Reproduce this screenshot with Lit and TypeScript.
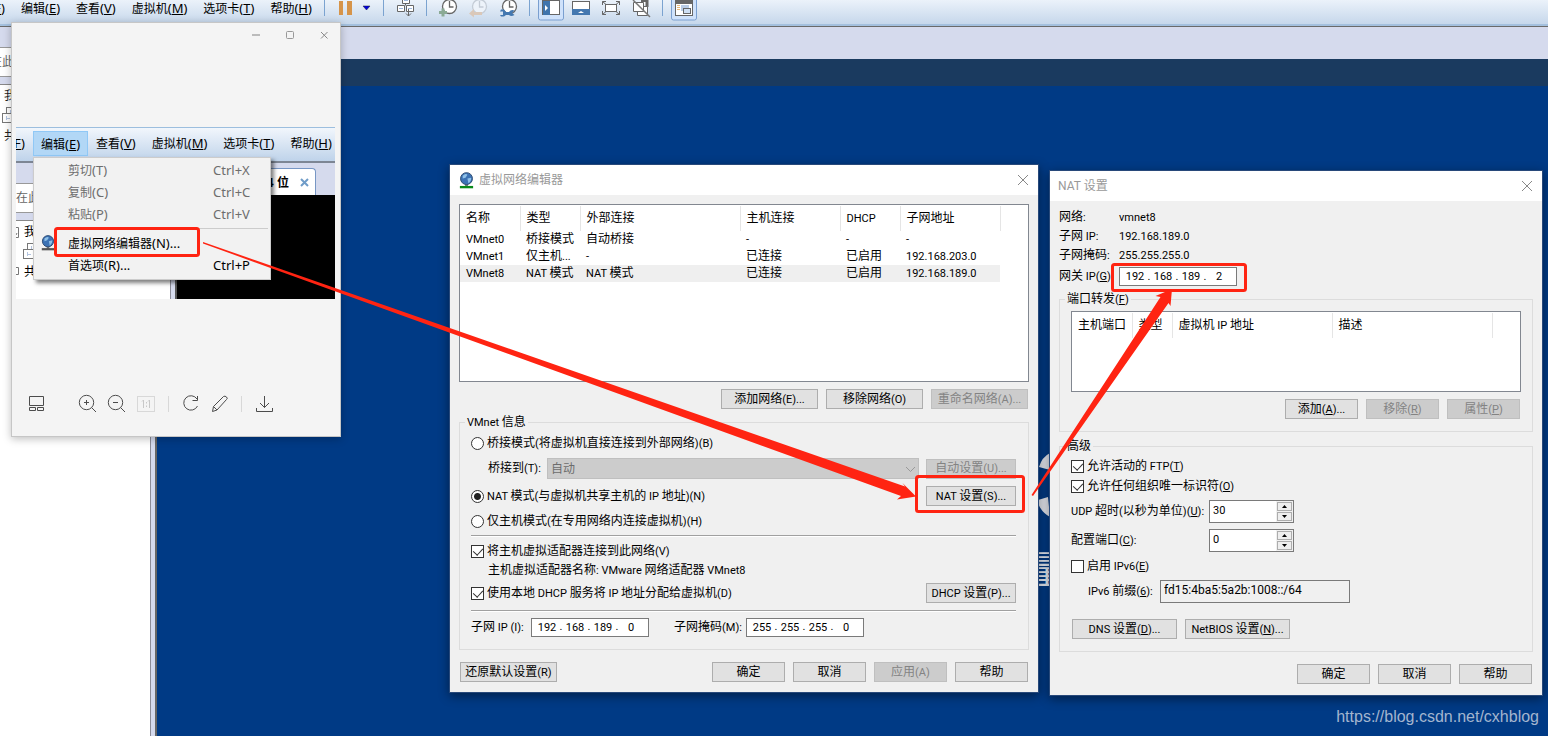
import { LitElement, html, css, svg } from "lit";
import { customElement } from "lit/decorators.js";

/* Sets Latin runs in their own size next to the Chinese glyphs; "&X" underlines the access key X. */
const tx = (text: string) =>
  text.split(/([\u2e80-\u9fff]+)/).filter(Boolean).map((run) => {
    if (/[\u2e80-\u9fff]/.test(run)) return run;
    const i = run.indexOf("&");
    if (i < 0) return html`<span class="latin">${run}</span>`;
    return html`<span class="latin">${run.slice(0, i)}<u>${run[i + 1]}</u>${run.slice(i + 2)}</span>`;
  });

const shared = css`
  * { box-sizing: border-box; }
  :host { font: 12px/16px "Roboto", "Noto Sans CJK SC", sans-serif; color: #000; }
  button, input, select { font: inherit; color: inherit; margin: 0; border-radius: 0; }
  svg { display: block; }
  .latin { font-size: 11px; white-space: pre; }
  .menu-font { font-family: "Noto Sans", "Noto Sans CJK SC", sans-serif; }
  .menu-font .latin { font-size: 13px; }
  u { text-underline-offset: 1px; }
`;

const dialogStyles = css`
  :host { display: block; background: #f0f0f0; border: 1px solid #28497a; box-shadow: 0 3px 10px rgba(0, 0, 0, 0.45); }
  .title { display: flex; align-items: center; height: 30px; padding: 0 9px 0 8px; background: #fff; color: #999; }
  .title h2 { flex: 1; margin: 0; font: inherit; }
  .title .latin { font-size: 12px; }
  .close { width: 12px; height: 12px; padding: 0; border: 0; background: none; }
  .btn { height: 20px; min-width: 73px; padding: 0 2px; border: 1px solid #adadad; background: #e1e1e1; line-height: 16px; white-space: nowrap; }
  .btn:disabled { background: #ccc; border-color: #bfbfbf; color: #838383; }
  .btn.w90 { width: 90px; }
  .btn.w97 { width: 97px; }
  .btn.w105 { width: 105px; }
  .buttons { display: flex; justify-content: flex-end; gap: 8px; padding-right: 1px; }
  .buttons .left { margin-right: auto; margin-left: 1px; }
  fieldset { display: flex; flex-direction: column; margin: 5px 0 0; padding: 0 12px 12px 11px; border: 1px solid #dcdcdc; min-width: 0; }
  legend { margin-left: -6px; padding: 0 2px; }
  .list { background: #fff; border: 1px solid #828790; }
  table { border-collapse: collapse; table-layout: fixed; }
  th, td { padding: 0 0 0 6px; font-weight: normal; text-align: left; white-space: nowrap; overflow: hidden; line-height: 17px; height: 17px; }
  th { height: 25px; border-right: 1px solid #e5e5e5; }
  .row { display: flex; align-items: center; min-height: 20px; white-space: nowrap; }
  .row.between { justify-content: space-between; }
  .check { display: flex; align-items: center; gap: 3px; }
  .check input { appearance: none; position: relative; width: 13px; height: 13px; border: 1px solid #333; background: #fff; flex: none; }
  .check input[type="radio"] { border-radius: 50%; }
  .check input[type="radio"]:checked { background: radial-gradient(circle, #222 3px, #fff 4px); }
  .check input[type="checkbox"]:checked::before { content: ""; position: absolute; left: 3px; top: 0; width: 5px; height: 8px; border: solid #333; border-width: 0 1px 1px 0; transform: rotate(42deg); }
  .ip { display: flex; align-items: center; width: 118px; height: 19px; padding-left: 3px; border: 1px solid #7a7a7a; background: #fff; font-size: 11px; }
  .ip input { width: 24px; height: 17px; padding: 0; border: 0; background: none; text-align: center; outline: 0; }
  .ip span { width: 4px; text-align: center; }
  .m4 { margin-top: 4px; }
  .m5 { margin-top: 5px; }
  .m6 { margin-top: 6px; }
  .m7 { margin-top: 7px; }
`;

const closeIcon = svg`<svg width="12" height="12" viewBox="0 0 12 12"><path d="M1 1L11 11M11 1L1 11" stroke="#888" fill="none"/></svg>`;

const ipField = (id: string, name: string, parts: string[]) => html`<div class="ip">
  ${parts.map((p, i) => html`${i ? html`<span>.</span>` : ""}<input id=${i ? `${id}-${i + 1}` : id} .value=${p} aria-label=${`${name} ${i + 1}`}>`)}
</div>`;

const globe = (size: number, base: string) => svg`<svg width=${size} height=${size} viewBox="0 0 16 18">
  <path d="M8 13V16" stroke="#777" stroke-width="3"/>
  <path d="M1 16H15" stroke=${base} stroke-width="2.5"/>
  <circle cx="8" cy="7" r="6.3" fill="#3c72b4" stroke="#27466f"/>
  <path d="M4 4Q7 1 9 3L7 6 4 7ZM9 7L13 6Q13 10 10 12Z" fill="#8fc1e8"/>
</svg>`;

const machines = svg`<svg class="machines" width="14" height="18" viewBox="2 0 14 18" fill="#fff" stroke="#777">
  <rect x="6.500" y=".5" width="10" height="9"/><rect x="2.500" y="6.500" width="10" height="9"/><path d="M6.500 9V13M6.500 11.500H10M10.500 3V6" stroke="#b4c4e0"/>
</svg>`;

@customElement("network-editor")
class NetworkEditor extends LitElement {
  static styles = [shared, dialogStyles, css`
    .title h2 { padding-left: 4px; }
    .body { padding: 9px 9px 10px; }
    .list { height: 178px; padding-top: 1px; }
    .list table { width: 540px; }
    .list tr.selected td { background: #efefef; }
    .indent { padding-left: 17px; }
    .to-label { width: 59px; }
    .row select { flex: 1; appearance: none; height: 21px; padding: 0 3px; border: 1px solid #bfbfbf; background: #ccc; color: #6d6d6d; opacity: 1; }
    .select { display: grid; flex: 1; margin-right: 7px; align-items: center; }
    .select select, .select svg { grid-area: 1 / 1; }
    .select svg { justify-self: end; margin-right: 3px; }
    hr { width: 100%; height: 2px; margin: 4px 0 0; border: 0; border-top: 1px solid #a0a0a0; border-bottom: 1px solid #fff; }
    .line { height: 18px; min-height: 18px; }
    .subnet { width: 60px; }
    .mask { width: 72px; margin-left: 25px; }
    .first { margin-top: 2px; }
    .last { margin-top: 12px; }
  `];

  private rows = [
    ["VMnet0", "桥接模式", "自动桥接", "-", "-", "-"],
    ["VMnet1", "仅主机...", "-", "已连接", "已启用", "192.168.203.0"],
    ["VMnet8", "NAT 模式", "NAT 模式", "已连接", "已启用", "192.168.189.0"],
  ];

  render() {
    return html`
      <div class="title">${globe(17, "#0a8a1a")}<h2>虚拟网络编辑器</h2><button class="close" aria-label="关闭">${closeIcon}</button></div>
      <div class="body">
        <div class="list">
          <table>
            <colgroup>${[60, 60, 160, 100, 60, 100].map((w) => html`<col style="width:${w}px">`)}</colgroup>
            <thead><tr>${["名称", "类型", "外部连接", "主机连接", "DHCP", "子网地址"].map((h) => html`<th>${tx(h)}</th>`)}</tr></thead>
            <tbody>${this.rows.map((r, i) => html`<tr class=${i === 2 ? "selected" : ""}>${r.map((c) => html`<td>${tx(c)}</td>`)}</tr>`)}</tbody>
          </table>
        </div>
        <div class="buttons m7">
          <button class="btn w97">${tx("添加网络(E)...")}</button>
          <button class="btn w97">${tx("移除网络(O)")}</button>
          <button class="btn w97" disabled>${tx("重命名网络(A)...")}</button>
        </div>
        <fieldset>
          <legend>${tx("VMnet 信息")}</legend>
          <div class="row first"><label class="check"><input type="radio" name="mode"><span>${tx("桥接模式(将虚拟机直接连接到外部网络)(B)")}</span></label></div>
          <div class="row indent m5">
            <label class="to-label" for="bridge">${tx("桥接到(T):")}</label>
            <div class="select"><select id="bridge" disabled><option>自动</option></select>
              <svg width="11" height="8" viewBox="0 0 11 8"><path d="M1 2L5.500 6.500 10 2" fill="none" stroke="#999"/></svg></div>
            <button class="btn w90" disabled>${tx("自动设置(U)...")}</button>
          </div>
          <div class="row between m7">
            <label class="check"><input type="radio" name="mode" checked><span>${tx("NAT 模式(与虚拟机共享主机的 IP 地址)(N)")}</span></label>
            <button class="btn w90">${tx("NAT 设置(S)...")}</button>
          </div>
          <div class="row m5"><label class="check"><input type="radio" name="mode"><span>${tx("仅主机模式(在专用网络内连接虚拟机)(H)")}</span></label></div>
          <hr>
          <div class="row m4"><label class="check"><input type="checkbox" checked><span>${tx("将主机虚拟适配器连接到此网络(V)")}</span></label></div>
          <div class="row line indent"><span>${tx("主机虚拟适配器名称: VMware 网络适配器 VMnet8")}</span></div>
          <div class="row between m4">
            <label class="check"><input type="checkbox" checked><span>${tx("使用本地 DHCP 服务将 IP 地址分配给虚拟机(D)")}</span></label>
            <button class="btn w90">${tx("DHCP 设置(P)...")}</button>
          </div>
          <hr class="m7">
          <div class="row m5">
            <label class="subnet" for="subnet">${tx("子网 IP (I):")}</label>${ipField("subnet", "子网 IP", ["192", "168", "189", "0"])}
            <label class="mask" for="mask">${tx("子网掩码(M):")}</label>${ipField("mask", "子网掩码", ["255", "255", "255", "0"])}
          </div>
        </fieldset>
        <div class="buttons last">
          <button class="btn w97 left">${tx("还原默认设置(R)")}</button>
          <button class="btn">确定</button>
          <button class="btn">取消</button>
          <button class="btn" disabled>${tx("应用(A)")}</button>
          <button class="btn">帮助</button>
        </div>
      </div>`;
  }
}

@customElement("nat-settings")
class NatSettings extends LitElement {
  static styles = [shared, dialogStyles, css`
    .body { padding: 7px 9px 11px; }
    dl { display: grid; grid-template-columns: 60px 1fr; margin: 0; line-height: 19px; }
    dd { margin: 0; }
    .gateway { display: grid; grid-template-columns: 60px 1fr; align-items: center; margin-top: 2px; }
    fieldset { padding-right: 11px; }
    .list { height: 81px; margin-top: 3px; padding-top: 1px; }
    .list table { width: 420px; }
    .advanced { margin-top: 6px; padding-top: 2px; }
    .field { height: 23px; }
    .field > label { width: 138px; }
    .spin { display: flex; width: 85px; height: 23px; border: 1px solid #7a7a7a; background: #fff; }
    .spin input { width: 66px; height: 18px; padding: 0 3px; border: 0; background: none; font-size: 11px; outline: 0; }
    .arrows { display: flex; flex-direction: column; gap: 1px; width: 17px; padding: 1px; background: #f0f0f0; }
    .arrows button { display: grid; place-items: center; flex: 1; padding: 0; border: 1px solid #adadad; background: #eee; }
    .prefix { padding-left: 17px; }
    .field.prefix > label { width: 72px; }
    .prefix input { width: 190px; height: 23px; padding: 0 3px 3px; border: 1px solid #7a7a7a; background: #f0f0f0; font-size: 12px; }
    .more { display: flex; gap: 8px; margin-top: 16px; padding-left: 1px; }
    .last { margin-top: 12px; }
  `];

  private spin(id: string, label: string, value: string, gap: string) {
    return html`<div class="row field ${gap}">
      <label for=${id}>${tx(label)}</label>
      <div class="spin"><input id=${id} .value=${value}>
        <div class="arrows">
          <button aria-label="增加"><svg width="5" height="3" viewBox="0 0 5 3"><path d="M0 3L2.500 0 5 3Z"/></svg></button>
          <button aria-label="减少"><svg width="5" height="3" viewBox="0 0 5 3"><path d="M0 0L2.500 3 5 0Z"/></svg></button>
        </div></div>
    </div>`;
  }

  render() {
    return html`
      <div class="title"><h2>${tx("NAT 设置")}</h2><button class="close" aria-label="关闭">${closeIcon}</button></div>
      <div class="body">
        <dl>
          <dt>${tx("网络:")}</dt><dd>${tx("vmnet8")}</dd>
          <dt>${tx("子网 IP:")}</dt><dd>${tx("192.168.189.0")}</dd>
          <dt>${tx("子网掩码:")}</dt><dd>${tx("255.255.255.0")}</dd>
        </dl>
        <div class="gateway"><label for="gateway">${tx("网关 IP(&G)")}</label>${ipField("gateway", "网关 IP", ["192", "168", "189", "2"])}</div>
        <fieldset>
          <legend>${tx("端口转发(&F)")}</legend>
          <div class="list">
            <table>
              <colgroup>${[60, 40, 160, 160].map((w) => html`<col style="width:${w}px">`)}</colgroup>
              <thead><tr>${["主机端口", "类型", "虚拟机 IP 地址", "描述"].map((h) => html`<th>${tx(h)}</th>`)}</tr></thead>
            </table>
          </div>
          <div class="buttons m7">
            <button class="btn">${tx("添加(&A)...")}</button>
            <button class="btn" disabled>${tx("移除(&R)")}</button>
            <button class="btn" disabled>${tx("属性(&P)")}</button>
          </div>
        </fieldset>
        <fieldset class="advanced">
          <legend>高级</legend>
          <div class="row"><label class="check"><input type="checkbox" checked><span>${tx("允许活动的 FTP(&T)")}</span></label></div>
          <div class="row"><label class="check"><input type="checkbox" checked><span>${tx("允许任何组织唯一标识符(&O)")}</span></label></div>
          ${this.spin("udp", "UDP 超时(以秒为单位)(&U):", "30", "m4")}
          ${this.spin("port", "配置端口(&C):", "0", "m6")}
          <div class="row m4"><label class="check"><input type="checkbox"><span>${tx("启用 IPv6(&E)")}</span></label></div>
          <div class="row field prefix m4"><label for="prefix">${tx("IPv6 前缀(&6):")}</label><input id="prefix" readonly .value=${"fd15:4ba5:5a2b:1008::/64"}></div>
          <div class="more">
            <button class="btn w105">${tx("DNS 设置(&D)...")}</button>
            <button class="btn w105">${tx("NetBIOS 设置(&N)...")}</button>
          </div>
        </fieldset>
        <div class="buttons last"><button class="btn">确定</button><button class="btn">取消</button><button class="btn">帮助</button></div>
      </div>`;
  }
}

const menuItems = ["编辑(&E)", "查看(&V)", "虚拟机(&M)", "选项卡(&T)", "帮助(&H)"];

@customElement("image-viewer")
class ImageViewer extends LitElement {
  static styles = [shared, css`
    :host { display: block; background: #f4f4f4; border: 1px solid #c6c6c6; box-shadow: 0 2px 8px rgba(0, 0, 0, 0.25); }
    .controls { display: flex; justify-content: flex-end; gap: 22px; height: 104px; padding: 6px 10px 0 0; }
    .controls button { width: 12px; height: 12px; padding: 0; border: 0; background: none; }
    .picture { position: relative; height: 172px; margin: 0 5px 0 4px; overflow: hidden; border-top: 1px solid #9cbede; display: flex; flex-direction: column; }
    .bar { display: flex; align-items: center; flex: none; height: 35px; padding-bottom: 2px; border-bottom: 2px solid #7d8694; background: linear-gradient(#f1f6fc, #bfd3ea); }
    .bar span.item { flex: none; height: 25px; padding: 4px 8px; white-space: nowrap; }
    .bar span.cut { display: flex; justify-content: flex-end; width: 17px; overflow: hidden; }
    .bar span.open { padding: 4px 7px; border: 1px solid #90c8f6; background: #b2d7f6; }
    .panes { display: flex; flex: 1; background: #d5daed; }
    .side { width: 155px; padding-top: 20px; border-right: 1px solid #8c8c98; }
    .search { height: 30px; padding: 6px 0; border: solid #999; border-width: 1px 0; background: #fff; color: #666; }
    .tree { height: 90px; margin-top: 7px; border-top: 1px solid #888; background: #fff; padding-top: 3px; display: grid; align-content: start; grid-template-columns: 8px 1fr; gap: 3px 0; }
    .tree svg { align-self: center; }
    .tree .machines { grid-column: 2; margin-left: -1px; }
    .guest { flex: 1; margin-left: 4px; border-left: 2px solid #555; display: flex; flex-direction: column; padding-top: 5px; }
    .tab { display: flex; align-items: center; justify-content: flex-end; gap: 11px; width: 139px; height: 27px; padding-right: 6px; border: solid #7796c4; border-width: 1px 1px 0 0; border-radius: 0 4px 0 0; background: #fff; font-weight: bold; }
    .screen { flex: 1; background: #000; }
    .menu { position: absolute; left: 17px; top: 29px; width: 238px; padding: 1px 2px 3px; background: #f2f2f2; border: 1px solid #ccc; box-shadow: 3px 3px 4px rgba(0, 0, 0, 0.5); }
    .menu div { display: grid; grid-template-columns: 32px 1fr 55px; align-items: center; height: 22px; white-space: nowrap; }
    .menu .off { color: #6d6d6d; }
    .menu svg { margin-left: 4px; }
    .menu hr { margin: 3px 0 3px 30px; border: 0; border-top: 1px solid #ccc; }
    .tools { display: flex; align-items: flex-start; height: 137px; padding: 74px 0 0 17px; }
    .tools svg { flex: none; }
  `];

  render() {
    return html`
      <div class="controls">
        <button aria-label="最小化"><svg width="12" height="12"><path d="M2 6H10" stroke="#bbb" stroke-width="2"/></svg></button>
        <button aria-label="最大化"><svg width="12" height="12"><rect x="2.500" y="2.500" width="7" height="7" rx="1" fill="none" stroke="#999"/></svg></button>
        <button aria-label="关闭"><svg width="12" height="12"><path d="M3 3L9.500 9.500M9.500 3L3 9.500" stroke="#888"/></svg></button>
      </div>
      <div class="picture menu-font">
        <div class="bar"><span class="item cut">${tx("(&F)")}</span>${menuItems.map((m, i) => html`<span class="item ${i ? "" : "open"}">${tx(m)}</span>`)}</div>
        <div class="panes">
          <div class="side"><div class="search">在此</div><div class="tree">
            <svg width="3" height="11"><path d="M0 .5H2.500V10.500H0M0 8L1 6" stroke="#777" fill="none"/></svg><span>我</span>
            ${machines}
            <svg width="3" height="11"><path d="M0 .5H2.500V7.500H0" stroke="#777" fill="none"/></svg><span>共</span>
          </div></div>
          <div class="guest"><div class="tab"><span>${tx("64 ")}位</span><svg width="9" height="9"><path d="M1 1L8 8M8 1L1 8" stroke="#6f9cc8" stroke-width="2"/></svg></div><div class="screen"></div></div>
        </div>
        <div class="menu">
          <div class="off"><i></i><span>${tx("剪切(T)")}</span>${tx("Ctrl+X")}</div>
          <div class="off"><i></i><span>${tx("复制(C)")}</span>${tx("Ctrl+C")}</div>
          <div class="off"><i></i><span>${tx("粘贴(P)")}</span>${tx("Ctrl+V")}</div>
          <hr>
          <div>${globe(16, "#555")}<span>${tx("虚拟网络编辑器(N)...")}</span></div>
          <div><i></i><span>${tx("首选项(R)...")}</span>${tx("Ctrl+P")}</div>
        </div>
      </div>
      <div class="tools">
        <svg width="250" height="60" viewBox="29 373 250 60" fill="none" stroke="#4c4c4c">
          <path d="M29.500 396.500H43.500V405.500H29.500ZM29.500 407.500H35.500V410.500H29.500ZM37.500 407.500H43.500V410.500H37.500Z"/>
          <circle cx="86.500" cy="402.500" r="7.200"/><path d="M91.700 407.700L96 412M84 402.500H89M86.500 400V405"/>
          <circle cx="115.500" cy="402.500" r="7.200"/><path d="M120.700 407.700L125 412M113 402.500H118"/>
          <g stroke="#d8d8d8"><rect x="137.500" y="396.500" width="17" height="15"/><path stroke="#c8c8c8" d="M142 401.500L143.500 400V408M148 401.500L149.500 400V408M146.500 402V403.500M146.500 405.500V407"/><path d="M168.500 396V412M241.500 396V412"/></g>
          <path d="M197 399A7.200 7.200 0 1 0 197.500 406M197.500 396V400.500H192.500"/>
          <path d="M212.500 411.500L213.500 406.500 223.500 396.500Q225 395.500 226.500 397T226.500 399.500L217 410ZM213.500 406.500L217 410"/>
          <path d="M264.500 396V407.500M260 403L264.500 407.500 269 403M256.500 408V411.500H272.500V408"/>
        </svg>
      </div>`;
  }
}

@customElement("app-root")
class AppRoot extends LitElement {
  static styles = [shared, css`
    :host { display: flex; flex-direction: column; position: relative; height: 100vh; overflow: hidden; background: #003a85; }
    header { display: flex; flex: none; height: 27px; border-bottom: 1px solid #6a6a6a; box-shadow: inset 0 -2px #a4c0de; background: linear-gradient(#ebf2fa, #c3d5ea); }
    nav { display: flex; width: 320px; }
    nav a { flex: none; padding: 0 8px; color: inherit; text-decoration: none; white-space: nowrap; }
    nav a.cut { display: flex; justify-content: flex-end; width: 13px; padding-left: 0; overflow: hidden; }
    .work { display: flex; flex: 1; min-height: 0; }
    aside { display: flex; flex-direction: column; width: 151px; padding-top: 20px; background: #d5daed; border-right: 1px solid #8c8c98; color: #222; }
    .search { height: 30px; padding: 6px 0; border: solid #999; border-width: 1px 0; background: #fff; color: #666; text-indent: -10px; overflow: hidden; }
    .tree { display: grid; align-content: start; gap: 3px; flex: 1; margin-top: 7px; padding: 3px 0 0 4px; border-top: 1px solid #888; background: #fff; }
    .tree .machines { margin-left: -2px; }
    .split { width: 6px; background: #d5daed; border-right: 2px solid #666; }
    .stage { flex: 1; display: flex; flex-direction: column; }
    .tabs { height: 32px; background: #d5daed; }
    .band { height: 27px; background: #1a3a5f; }
    .wallpaper { position: absolute; left: 1020px; top: 440px; color: #e8ecf4; }
    .wallpaper span { position: absolute; left: 8px; top: 108px; font-size: 38px; line-height: 44px; }
    image-viewer { position: absolute; left: 11px; top: 22px; width: 330px; }
    network-editor { position: absolute; left: 449px; top: 164px; width: 590px; }
    nat-settings { position: absolute; left: 1049px; top: 170px; width: 494px; }
    .marks { position: absolute; left: 0; top: 0; pointer-events: none; }
    .credit { position: absolute; right: 9px; bottom: 8px; font: 16px/22px "Liberation Sans", sans-serif; color: #a3b5cf; }
  `];

  render() {
    return html`
      <header class="menu-font">
        <nav><a class="cut" href="#file">${tx("(&F)")}</a>${menuItems.map((m) => html`<a href="#menu">${tx(m)}</a>`)}</nav>
        <svg width="380" height="22" viewBox="320 0 380 22" fill="none" stroke="#666">
          <path stroke="#7ba3d0" d="M324.500 0V16M383.500 0V16M426.500 0V16M529.500 0V16M662.500 0V16"/>
          <path fill="#d6944a" stroke="none" d="M339 1H343V15H339ZM347 1H352V15H347Z"/>
          <path fill="#0000e0" stroke="#223" stroke-width=".5" d="M363 6H370L366.500 10Z"/>
          <g fill="#fff"><path d="M402.500 -2V3.500H409.500V-2M397.500 5.500H404.500V11.500H397.500ZM406.500 5.500H413.500V11.500H406.500ZM405.500 3.500V5.500"/><path d="M408.500 9V16M406 13.500L408.500 16 411 13.500" fill="none"/></g>
          <path stroke="#9db7dc" d="M399 8.500H403M408 8.500H412M404 .5H408"/>
          <g stroke-width="1.300"><circle cx="449.500" cy="6.500" r="7" fill="#fff"/><path d="M449.500 1V7H453.500"/><path stroke="#8baa95" stroke-width="3" d="M439 12.500H447M443 8.500V16.500"/></g>
          <g stroke="#c4ccd6" stroke-width="1.300"><circle cx="479.500" cy="6.500" r="7" fill="#edf3fa"/><path d="M479.500 1V7H483.500"/><path stroke="none" fill="#dac8b9" d="M469 13.500L474 9V12H482V15H474V17.500Z"/></g>
          <g stroke-width="1.300"><circle cx="509.500" cy="6.500" r="7" fill="#fff"/><path d="M509.500 1V7H513.500"/><path stroke="none" fill="#4478b0" d="M501 9.500H504L506 12H509Q511 9 514.500 10.500L512 13 514.500 15Q511 17 509 15H506L504 16.500H501L500 15H503V11.500H500Z"/></g>
          <rect x="538.500" y="-3" width="25" height="23" rx="2" fill="#cfe2fb" stroke="#7a9fd0"/>
          <rect x="542.500" y=".5" width="17" height="14" fill="#fff"/><path fill="#3f74ad" stroke="none" d="M543 1H550V15H543Z"/><path fill="#fff" stroke="none" d="M545 5L548 8 545 11Z"/>
          <rect x="572.500" y="1.500" width="17" height="13" fill="#fff"/><path fill="#4478b0" stroke="none" d="M572 9H590V15H572Z"/><path fill="#fff" stroke="none" d="M578 13L581 11 584 13Z"/>
          <rect x="605.500" y="4.500" width="11" height="7" fill="#fff"/><path d="M602.500 5V1.500H606M616 1.500H619.500V5M619.500 11V14.500H616M606 14.500H602.500V11M602.500 1.500L606 4.500M619.500 1.500L616 4.500M619.500 14.500L616 11.500M602.500 14.500L606 11.500"/>
          <g fill="#fff"><path stroke-width="3" d="M641 .5H647V7"/><path d="M637.500 6.500H647.500V15.500H637.500Z"/><path d="M633.500 2.500H643.500V11.500H633.500Z"/><path stroke="#777" stroke-width="1.500" d="M633 0L650 17"/></g>
          <rect x="671.500" y="-3" width="25" height="23" rx="2" fill="#cfe2fb" stroke="#7a9fd0"/>
          <rect x="675.500" y=".5" width="17" height="15" fill="#fff"/><path fill="#666" stroke="none" d="M675 0H693V4H675Z"/><path fill="#b9cce5" stroke="none" d="M681 5H689V11H681Z"/><rect x="683.500" y="8.500" width="7" height="5" fill="#cfe0f4"/><path stroke="#e8b878" d="M677 5.500H680M677 7.500H680M677 9.500H680"/>
        </svg>
      </header>
      <div class="work">
        <aside><div class="search">在此</div><div class="tree"><span>我</span>${machines}<span>共</span></div></aside>
        <div class="split"></div>
        <div class="stage"><div class="tabs"></div><div class="band"></div></div>
      </div>
      <div class="wallpaper">
        <svg width="30" height="80" viewBox="1020 440 30 80" fill="#e6e9f0"><path d="M1050 453Q1042 457 1039 467L1050 470ZM1038 500L1048 497 1050 517Q1041 512 1038 503Z"/></svg>
        <span>量</span>
      </div>
      <image-viewer></image-viewer>
      <network-editor></network-editor>
      <nat-settings></nat-settings>
      <svg class="marks" width="1548" height="736" viewBox="0 0 1548 736" fill="none" stroke="#ff2412" stroke-width="3">
        <rect x="55.500" y="228.500" width="143" height="27" rx="2"/>
        <rect x="916.500" y="476.500" width="107" height="35" rx="2"/>
        <rect x="1112.500" y="264.500" width="133" height="26" rx="2"/>
        <g stroke="none" fill="#ff2412">
          <path d="M203 242L905 486.500 902.500 483 916 496.500 897 499.500 901 496 203 243.500Z"/>
          <path d="M1031.500 495L1160.500 297 1155.500 296 1172 289 1170.500 306 1168.500 303 1033 496Z"/>
        </g>
      </svg>
      <div class="credit">https://blog.csdn.net/cxhblog</div>`;
  }
}
